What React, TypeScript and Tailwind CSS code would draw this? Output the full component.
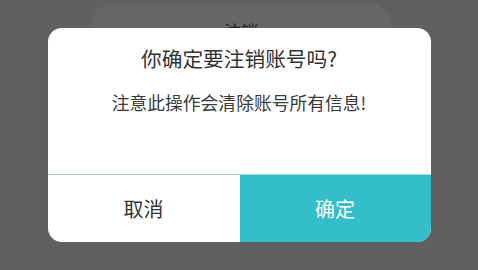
import React from "react";

export default function App() {
  return (
    <div
      className="relative w-[478px] h-[270px] overflow-hidden bg-[#606060]"
      style={{ fontFamily: '"Noto Sans CJK SC", "Noto Sans", sans-serif' }}
    >
      <div className="absolute left-[90px] top-[3px] w-[302px] h-[200px] rounded-[24px] bg-[#666666] flex justify-center pt-[16px]">
        <span className="text-[17px] leading-[24px] text-[#222]">注销</span>
      </div>
      <div className="absolute inset-0 flex items-center justify-center">
        <div className="w-[383px] h-[214px] rounded-[14px] bg-white overflow-hidden flex flex-col">
          <div className="h-[146px] flex flex-col items-center pt-[17px]">
            <div className="text-[20.7px] leading-[26px] text-[#333]">你确定要注销账号吗?</div>
            <div className="mt-[19px] text-[17.8px] leading-[24px] text-[#3a3a3a]">注意此操作会清除账号所有信息!</div>
          </div>
          <div className="h-px bg-[#9fd6da]" />
          <div className="flex flex-1">
            <div className="w-[192px] flex items-center justify-center text-[20px] text-[#333]">取消</div>
            <div className="flex-1 flex items-center justify-center bg-[#33bec9] text-[20px] text-white">确定</div>
          </div>
        </div>
      </div>
    </div>
  );
}
